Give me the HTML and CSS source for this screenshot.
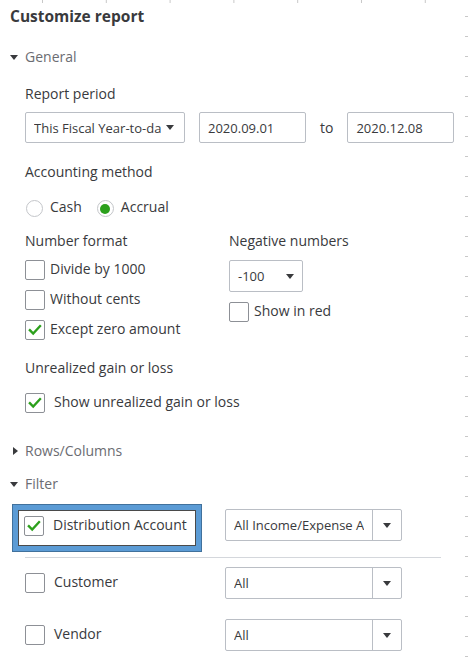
FILE: index.html
```html
<!DOCTYPE html>
<html>
<head>
<meta charset="utf-8">
<link rel="stylesheet" href="styles.css">
</head>
<body>
<div class="page">
  <div class="panel">
    <h1 class="title">Customize report</h1>

    <div class="section-head"><span class="tri"><span class="tri-down"></span></span>General</div>
    <div class="section-body">
      <div class="label lbl-period">Report period</div>
      <div class="period-row">
        <div class="select period-select"><span class="sel-text">This Fiscal Year-to-date</span><span class="caret"></span></div>
        <div class="input">2020.09.01</div>
        <span class="to">to</span>
        <div class="input">2020.12.08</div>
      </div>

      <div class="label lbl-method">Accounting method</div>
      <div class="radio-row">
        <div class="radio"><span class="circle"></span><span class="radio-text">Cash</span></div>
        <div class="radio"><span class="circle on"></span><span class="radio-text">Accrual</span></div>
      </div>

      <div class="two-col">
        <div class="col col-left">
          <div class="label">Number format</div>
          <div class="check-row first"><span class="box"></span><span class="check-text">Divide by 1000</span></div>
          <div class="check-row"><span class="box"></span><span class="check-text">Without cents</span></div>
          <div class="check-row"><span class="box"><svg class="tick" viewBox="0 0 20 20"><path d="M4.3 10.2 L8 13.9 L15.6 5.6"/></svg></span><span class="check-text">Except zero amount</span></div>
        </div>
        <div class="col">
          <div class="label">Negative numbers</div>
          <div class="select neg-select"><span class="neg-text">-100</span><span class="caret"></span></div>
          <div class="check-row"><span class="box"></span><span class="check-text">Show in red</span></div>
        </div>
      </div>

      <div class="label lbl-unreal">Unrealized gain or loss</div>
      <div class="check-row wide first"><span class="box"><svg class="tick" viewBox="0 0 20 20"><path d="M4.3 10.2 L8 13.9 L15.6 5.6"/></svg></span><span class="check-text">Show unrealized gain or loss</span></div>
    </div>

    <div class="section-head rows-head"><span class="tri"><span class="tri-right"></span></span>Rows/Columns</div>
    <div class="section-head filter-head"><span class="tri"><span class="tri-down"></span></span>Filter</div>

    <div class="filter">
      <div class="filter-row dist-row">
        <div class="hl">
          <div class="hl-inner">
            <span class="box"><svg class="tick" viewBox="0 0 20 20"><path d="M4.3 10.2 L8 13.9 L15.6 5.6"/></svg></span><span class="check-text">Distribution Account</span>
          </div>
        </div>
        <div class="dropdown dd-top"><span class="dd-text"><span class="dd-clip">All Income/Expense Accounts</span></span><span class="dd-btn"><span class="caret"></span></span></div>
      </div>
      <div class="rule"></div>
      <div class="filter-row">
        <div class="filter-left"><span class="box"></span><span class="check-text">Customer</span></div>
        <div class="dropdown"><span class="dd-text"><span class="dd-clip">All</span></span><span class="dd-btn"><span class="caret"></span></span></div>
      </div>
      <div class="filter-row vendor-row">
        <div class="filter-left"><span class="box"></span><span class="check-text">Vendor</span></div>
        <div class="dropdown"><span class="dd-text"><span class="dd-clip">All</span></span><span class="dd-btn"><span class="caret"></span></span></div>
      </div>
    </div>
  </div>
</div>
</body>
</html>
```

FILE: styles.css
```css
html, body {
  margin: 0;
  padding: 0;
  background: #ffffff;
}

body {
  font-family: "Open Sans", "Liberation Sans", sans-serif;
  font-size: 14px;
  line-height: 20px;
  color: #393a3d;
}

.page {
  position: relative;
  min-height: 658px;
  overflow: hidden;
}

/* ruler-like decorations along the top and right edge */
.page::before {
  content: "";
  position: absolute;
  left: 0;
  top: 0;
  width: 100%;
  height: 3px;
  background-image: linear-gradient(to right, #c8c8c8 0, #c8c8c8 1px, transparent 1px);
  background-size: 63.8px 3px;
  background-position: 42px 0;
  background-repeat: repeat-x;
}

.page::after {
  content: "";
  position: absolute;
  right: 0;
  top: 0;
  width: 3px;
  height: 100%;
  background-image: linear-gradient(to bottom, #c8c8c8 0, #c8c8c8 1px, transparent 1px);
  background-size: 3px 20px;
  background-position: 0 16px;
  background-repeat: repeat-y;
}

.panel {
  padding: 5px 0 0 10px;
}

.title {
  margin: 0;
  font-size: 15.5px;
  line-height: 22px;
  font-weight: 700;
  color: #393a3d;
}

.section-head {
  display: flex;
  align-items: center;
  margin-top: 20px;
  height: 20px;
  color: #6b6c72;
}

.rows-head { margin-top: 28px; }
.filter-head { margin-top: 13px; }

.tri {
  width: 15px;
  display: flex;
  align-items: center;
}

.tri-down {
  width: 0;
  height: 0;
  border-left: 4.5px solid transparent;
  border-right: 4.5px solid transparent;
  border-top: 5px solid #393a3d;
}

.tri-right {
  width: 0;
  height: 0;
  margin-left: 3px;
  border-top: 4.5px solid transparent;
  border-bottom: 4.5px solid transparent;
  border-left: 5px solid #393a3d;
}

.section-body {
  padding-left: 15px;
}

.label {
  height: 20px;
  color: #393a3d;
}

.lbl-period { margin-top: 17px; }
.lbl-method { margin-top: 19px; }
.lbl-unreal { margin-top: 18px; }

.period-row {
  display: flex;
  align-items: center;
  margin-top: 8px;
  height: 31px;
}

.select, .input {
  box-sizing: border-box;
  height: 31px;
  border: 1px solid #babec5;
  border-radius: 2px;
  display: flex;
  align-items: center;
  padding-left: 8px;
  font-size: 13px;
  color: #393a3d;
  background: #fff;
}

.period-select {
  width: 160px;
}

.sel-text {
  width: 127px;
  overflow: hidden;
  white-space: nowrap;
}

.caret {
  width: 0;
  height: 0;
  border-left: 4px solid transparent;
  border-right: 4px solid transparent;
  border-top: 5px solid #393a3d;
}

.period-select .caret {
  margin-left: 5px;
}

.input {
  width: 107px;
  margin-left: 14px;
}

.to {
  margin-left: 14px;
  color: #393a3d;
}

.radio-row {
  display: flex;
  margin-top: 15px;
  height: 20px;
}

.radio {
  display: flex;
  align-items: flex-start;
  margin-left: 1px;
}

.radio + .radio {
  margin-left: 15px;
}

.circle {
  box-sizing: border-box;
  width: 17px;
  height: 17px;
  margin-top: 3px;
  margin-right: 7px;
  border: 1px solid #c4c6ca;
  border-radius: 50%;
  display: flex;
  align-items: center;
  justify-content: center;
}

.circle.on::after {
  content: "";
  width: 10px;
  height: 10px;
  border-radius: 50%;
  background: #2ca01c;
}

.radio-text {
  line-height: 20px;
}

.two-col {
  display: flex;
  margin-top: 14px;
}

.col-left {
  width: 204px;
}

.check-row {
  display: flex;
  align-items: flex-start;
  height: 20px;
  margin-top: 10px;
}

.check-row.first {
  margin-top: 9px;
}

.lbl-unreal + .check-row.first {
  margin-top: 15px;
}

.box {
  box-sizing: border-box;
  flex: none;
  width: 20px;
  height: 20px;
  border: 1px solid #8d9096;
  border-radius: 2px;
  background: #fff;
  display: flex;
}

.tick {
  width: 18px;
  height: 18px;
}

.tick path {
  fill: none;
  stroke: #2ca01c;
  stroke-width: 2.6;
  stroke-linecap: square;
  stroke-linejoin: miter;
}

.check-text {
  margin-left: 5px;
  line-height: 17px;
}

.check-row.wide .check-text,
.hl-inner .check-text,
.filter-left .check-text {
  margin-left: 9px;
}

.neg-select {
  width: 74px;
  height: 32px;
  margin-top: 9px;
}

.neg-text {
  width: 48px;
}

.filter {
  margin-top: 10px;
  padding-left: 15px;
}

.filter-row {
  display: flex;
  align-items: center;
  height: 32px;
  margin-top: 9px;
}

.vendor-row {
  margin-top: 20px;
}

.dist-row {
  align-items: flex-start;
  height: 48px;
  margin-top: 0;
}

.hl {
  box-sizing: border-box;
  width: 190px;
  height: 48px;
  margin-left: -13px;
  margin-right: 23px;
  border: 1px solid #41719c;
  background: #5b9bd5;
  padding: 5px;
}

.hl-inner {
  box-sizing: border-box;
  height: 36px;
  border: 1px solid #4a4a4a;
  background: #fff;
  display: flex;
  align-items: flex-start;
  padding: 5px 0 0 5px;
}

.filter-left {
  width: 200px;
  display: flex;
  align-items: flex-start;
  height: 20px;
}

.dropdown {
  box-sizing: border-box;
  width: 177px;
  height: 32px;
  border: 1px solid #babec5;
  border-radius: 2px;
  display: flex;
  font-size: 13px;
  background: #fff;
}

.dd-top {
  margin-top: 5px;
}

.dd-text {
  box-sizing: border-box;
  width: 147px;
  padding-left: 8px;
  border-right: 1px solid #babec5;
  display: flex;
  align-items: center;
}

.dd-clip {
  width: 130px;
  overflow: hidden;
  white-space: nowrap;
}

.dd-btn {
  flex: 1;
  display: flex;
  align-items: center;
  justify-content: center;
}

.rule {
  width: 416px;
  height: 1px;
  margin-top: 5px;
  background: #d4d7dc;
}
```
